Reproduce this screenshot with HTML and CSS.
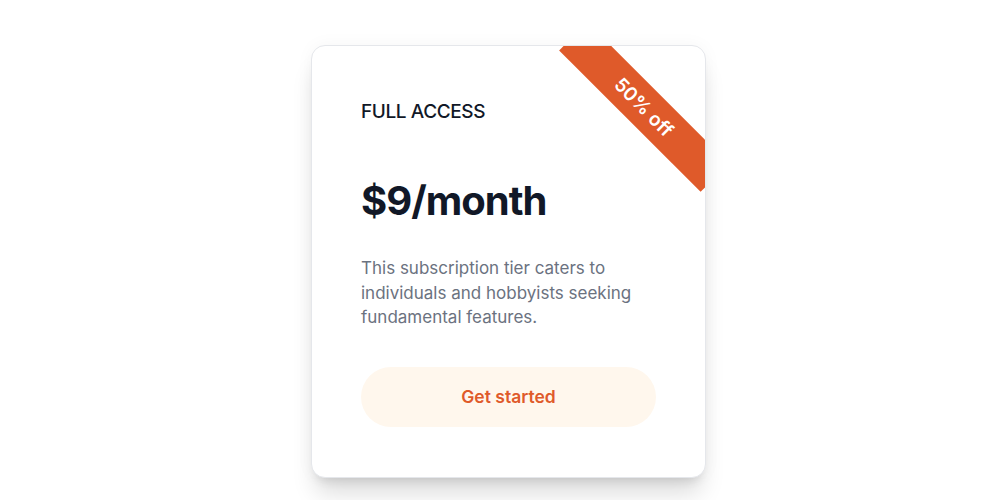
FILE: index.html
```html
<!DOCTYPE html>
<html lang="en">
<head>
<meta charset="utf-8">
<title>Pricing</title>
<link rel="stylesheet" href="styles.css">
</head>
<body>
  <main class="page">
    <section class="plan-card">
      <div class="ribbon"><span>50% off</span></div>
      <h2 class="plan-name">FULL ACCESS</h2>
      <p class="plan-price">$9/month</p>
      <p class="plan-desc">This subscription tier caters to individuals and hobbyists seeking fundamental features.</p>
      <a class="plan-cta" href="#">Get started</a>
    </section>
  </main>
</body>
</html>
```

FILE: styles.css
```css
* {
  box-sizing: border-box;
}

html, body {
  margin: 0;
  background: #ffffff;
  font-family: Inter, "Noto Sans", sans-serif;
}

body {
  height: 500px;
  overflow: hidden;
}

.page {
  height: 100%;
  display: flex;
  justify-content: center;
  align-items: flex-start;
  padding: 45px 0 0 17px;
}

.plan-card {
  position: relative;
  overflow: hidden;
  width: 395px;
  padding: 52px 49px 50px;
  background: #ffffff;
  border: 1px solid #e5e7eb;
  border-radius: 14px;
  box-shadow: 0 20px 25px -5px rgba(0, 0, 0, 0.14), 0 8px 10px -6px rgba(0, 0, 0, 0.1), 0 0 18px rgba(0, 0, 0, 0.04);
  display: flex;
  flex-direction: column;
}

/* diagonal discount band across the top-right corner */
.ribbon {
  position: absolute;
  top: 41px;
  right: -39px;
  width: 200px;
  height: 40px;
  transform: rotate(45deg);
  background: #df5a2a;
  display: flex;
  align-items: center;
  justify-content: center;
}

.ribbon span {
  color: #ffffff;
  font-size: 19px;
  font-weight: 600;
}

.plan-name {
  margin: 0;
  font-size: 19px;
  line-height: 28px;
  font-weight: 500;
  letter-spacing: -0.4px;
  color: #111827;
}

.plan-price {
  margin: 51px 0 0;
  font-size: 40px;
  line-height: 48px;
  font-weight: 700;
  letter-spacing: -0.025em;
  color: #111827;
}

.plan-desc {
  margin: 31px 0 0;
  font-size: 17px;
  line-height: 24.5px;
  color: #6b7280;
}

.plan-cta {
  margin-top: 37px;
  height: 60px;
  border-radius: 9999px;
  background: #fff7ed;
  color: #df5a2a;
  font-size: 17.5px;
  font-weight: 600;
  text-decoration: none;
  display: flex;
  align-items: center;
  justify-content: center;
}
```
